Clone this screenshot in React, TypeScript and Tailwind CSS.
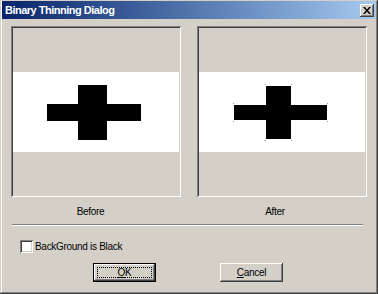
import React from 'react';

const raised =
  'shadow-[inset_-1px_-1px_#404040,inset_1px_1px_#ffffff,inset_-2px_-2px_#808080,inset_2px_2px_#d4d0c8]';
const sunken =
  'shadow-[inset_1px_1px_#808080,inset_-1px_-1px_#ffffff,inset_2px_2px_#404040,inset_-2px_-2px_#d4d0c8]';

function Preview({ thinned }: { thinned?: boolean }) {
  return (
    <div className={`w-[170px] h-[171px] p-[2px] bg-[#d4d0c8] flex items-center ${sunken}`}>
      <div className="w-full h-[80px] bg-white">
        <svg width="166" height="80" viewBox="0 0 166 80">
          {thinned ? (
            <g>
              <rect x="35" y="33" width="93" height="15" fill="#000" />
              <rect x="67" y="14" width="25" height="53" fill="#000" />
              {/* leftover corner pixels */}
              <rect x="66" y="12" width="1" height="1" fill="#9a9a9a" />
              <rect x="92" y="12" width="1" height="1" fill="#9a9a9a" />
              <rect x="66" y="68" width="1" height="1" fill="#9a9a9a" />
              <rect x="92" y="68" width="1" height="1" fill="#9a9a9a" />
              <rect x="34" y="31" width="1" height="1" fill="#9a9a9a" />
              <rect x="128" y="31" width="1" height="1" fill="#9a9a9a" />
              <rect x="34" y="49" width="1" height="1" fill="#9a9a9a" />
              <rect x="128" y="49" width="1" height="1" fill="#9a9a9a" />
            </g>
          ) : (
            <g>
              <rect x="34" y="32" width="94" height="17" fill="#000" />
              <rect x="65" y="13" width="29" height="55" fill="#000" />
            </g>
          )}
        </svg>
      </div>
    </div>
  );
}

export default function App() {
  return (
    <div
      className="w-[378px] h-[294px] bg-[#d4d0c8] flex flex-col font-['Liberation_Sans',Arial,sans-serif] text-black shadow-[inset_-1px_-1px_#404040,inset_1px_1px_#d4d0c8,inset_-2px_-2px_#808080,inset_2px_2px_#ffffff]"
    >
      {/* Title bar */}
      <div className="mt-[1px] mx-[2px] h-[18px] flex items-center justify-between bg-gradient-to-r from-[#0a246a] to-[#a6caf0] pl-[3px] pr-[2px]">
        <span className="text-white font-bold text-[11px] tracking-[-0.5px] leading-none">
          Binary Thinning Dialog
        </span>
        <div className={`w-[14px] h-[13px] bg-[#d4d0c8] flex items-center justify-center ${raised}`}>
          <svg width="8" height="7" viewBox="0 0 8 7">
            <path d="M0 0h2l2 2.5L6 0h2L5 3.5 8 7H6L4 4.5 2 7H0l3-3.5z" fill="#000" />
          </svg>
        </div>
      </div>

      {/* Previews */}
      <div className="mt-[7px] pl-[11px] flex gap-[16px]">
        <Preview />
        <Preview thinned />
      </div>

      {/* Labels */}
      <div className="mt-[9px] pl-[11px] flex gap-[16px] text-[10px] leading-[12px] tracking-[-0.3px]">
        <div className="w-[170px] text-center pr-[11px]">Before</div>
        <div className="w-[170px] text-center pr-[14px]">After</div>
      </div>

      {/* Separator */}
      <div className="mt-[6px] ml-[12px] w-[351px] border-t border-b border-t-[#808080] border-b-white" />

      {/* Checkbox */}
      <div className="mt-[14px] ml-[20px] flex items-center gap-[2px] text-[10px] leading-[13px] tracking-[-0.3px]">
        <div className={`w-[13px] h-[13px] bg-white ${sunken}`} />
        <span>BackGround is Black</span>
      </div>

      {/* Buttons */}
      <div className="mt-[10px] ml-[93px] flex gap-[64px] text-[10px] tracking-[-0.3px]">
        <button className="w-[63px] h-[19px] border border-black bg-[#d4d0c8] p-0">
          <div className={`w-full h-full p-[3px] ${raised}`}>
            <div className="w-full h-full border border-dotted border-black flex items-center justify-center leading-none">
              <span><u>O</u>K</span>
            </div>
          </div>
        </button>
        <button className={`w-[63px] h-[19px] bg-[#d4d0c8] flex items-center justify-center leading-none ${raised}`}>
          <span><u>C</u>ancel</span>
        </button>
      </div>
    </div>
  );
}
